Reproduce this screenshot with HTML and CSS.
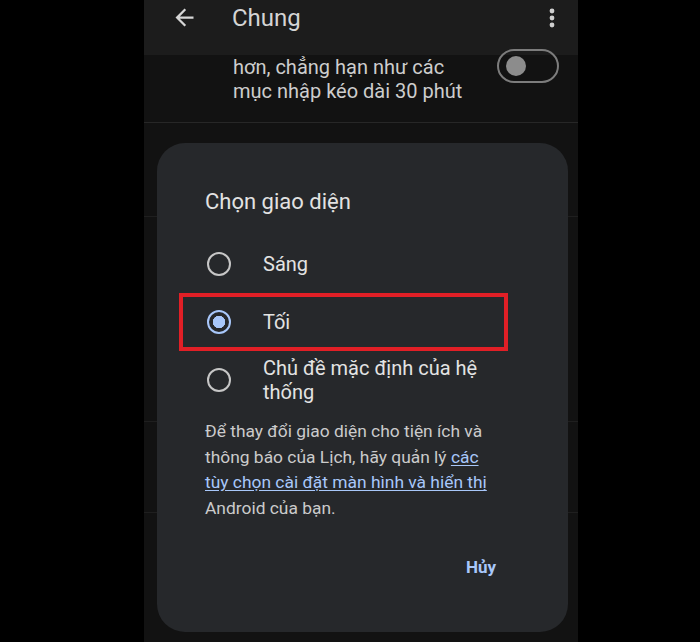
FILE: index.html
```html
<!DOCTYPE html>
<html lang="vi">
<head>
    <meta charset="UTF-8">
    <meta name="viewport" content="width=device-width, initial-scale=1.0">
    <title>Chung - Chọn giao diện</title>
    <link rel="stylesheet" href="styles.css">
</head>
<body>
    <div class="stage">
        <div class="phone">
            <header class="appbar">
                <svg class="back" viewBox="0 0 24 24" width="27" height="27">
                    <path d="M20 11H7.83l5.59-5.59L12 4l-8 8 8 8 1.41-1.41L7.83 13H20v-2z" fill="currentColor"/>
                </svg>
                <h1>Chung</h1>
                <svg class="more" viewBox="0 0 6 20" width="6" height="20">
                    <circle cx="3" cy="3" r="2.4" fill="currentColor"/>
                    <circle cx="3" cy="10" r="2.4" fill="currentColor"/>
                    <circle cx="3" cy="17" r="2.4" fill="currentColor"/>
                </svg>
            </header>

            <div class="setting">
                <p>hơn, chẳng hạn như các<br>mục nhập kéo dài 30 phút</p>
                <span class="switch"><span class="thumb"></span></span>
            </div>

            <div class="list">
                <div class="list-row r1"></div>
                <div class="list-row r2"></div>
                <div class="list-row r3"></div>
            </div>

            <!-- Hộp thoại chọn giao diện -->
            <section class="dialog">
                <h2>Chọn giao diện</h2>
                <div class="options">
                    <label class="option">
                        <span class="radio"></span>
                        <span class="label">Sáng</span>
                    </label>
                    <label class="option selected">
                        <span class="radio"></span>
                        <span class="label">Tối</span>
                        <span class="mark"></span>
                    </label>
                    <label class="option">
                        <span class="radio"></span>
                        <span class="label">Chủ đề mặc định của hệ thống</span>
                    </label>
                </div>
                <p class="desc">Để thay đổi giao diện cho tiện ích và thông báo của Lịch, hãy quản lý <a href="#">các tùy chọn cài đặt màn hình và hiển thị</a> Android của bạn.</p>
                <div class="actions">
                    <button type="button">Hủy</button>
                </div>
            </section>
        </div>
    </div>
</body>
</html>
```

FILE: styles.css
```css
* {
    margin: 0;
    padding: 0;
    box-sizing: border-box;
}

body {
    background: #000;
    font-family: Roboto, "Noto Sans", sans-serif;
    color: #e3e3e3;
    overflow: hidden;
}

.stage {
    padding-left: 144px;
}

.phone {
    position: relative;
    width: 434px;
    height: 642px;
    background: #121212;
    overflow: hidden;
}

/* Thanh tiêu đề */
.appbar {
    height: 55px;
    background: #1c1c1c;
    display: flex;
    align-items: flex-start;
    padding-top: 4px;
    color: #d6d6d6;
}

.appbar .back {
    margin-left: 27px;
}

.appbar h1 {
    font-size: 24px;
    font-weight: 400;
    line-height: 28px;
    margin-left: 34px;
    flex: 1;
    color: #d4d4d4;
}

.appbar .more {
    margin-right: 23px;
    margin-top: 4px;
    color: #cfcfcf;
}

/* Dòng cài đặt phía sau */
.setting {
    height: 68px;
    display: flex;
    justify-content: space-between;
    padding-left: 89px;
    padding-right: 19px;
    border-bottom: 1px solid #272727;
}

.setting p {
    font-size: 20px;
    line-height: 24px;
    color: #cdcdcd;
}

.switch {
    position: relative;
    width: 62px;
    height: 34px;
    margin-top: -6px;
    border: 2px solid #7c7c7c;
    border-radius: 17px;
}

.switch .thumb {
    position: absolute;
    left: 7px;
    top: 5px;
    width: 20px;
    height: 20px;
    border-radius: 50%;
    background: #8c8c8c;
}

.list-row {
    border-bottom: 1px solid #1f1f1f;
}

.r1 { height: 94px; }
.r2 { height: 205px; }
.r3 { height: 91px; }

/* Hộp thoại */
.dialog {
    position: absolute;
    left: 13px;
    top: 143px;
    width: 411px;
    height: 489px;
    background: #26282b;
    border-radius: 28px;
    padding: 45px 48px 0;
}

.dialog h2 {
    font-size: 22px;
    font-weight: 400;
    line-height: 28px;
    color: #e2e2e2;
}

.options {
    margin-top: 19px;
}

.option {
    position: relative;
    display: flex;
    align-items: center;
    gap: 32px;
    min-height: 58px;
    padding: 5px 0 5px 2px;
}

.radio {
    flex: none;
    width: 24px;
    height: 24px;
    border: 2px solid #c6c6c6;
    border-radius: 50%;
}

.option.selected .radio {
    border-color: #a8c7fa;
    background: radial-gradient(circle, #a8c7fa 0 6px, transparent 6.5px);
}

.label {
    font-size: 20px;
    line-height: 24px;
    color: #e3e3e3;
    max-width: 240px;
}

/* Khung đỏ đánh dấu */
.mark {
    position: absolute;
    left: -26px;
    top: 0;
    width: 329px;
    height: 58px;
    border: 4px solid #e11f26;
}

.desc {
    margin-top: 10px;
    margin-right: 24px;
    font-size: 17.4px;
    line-height: 25.7px;
    color: #cbcbcb;
}

.desc a {
    color: #a8c7fa;
    text-decoration: underline;
    text-underline-offset: 2px;
}

.actions {
    display: flex;
    justify-content: flex-end;
    margin-top: 25px;
    padding-right: 24px;
}

.actions button {
    height: 40px;
    background: none;
    border: none;
    font-family: inherit;
    font-size: 17px;
    font-weight: 700;
    color: #a8c7fa;
    cursor: pointer;
}
```
